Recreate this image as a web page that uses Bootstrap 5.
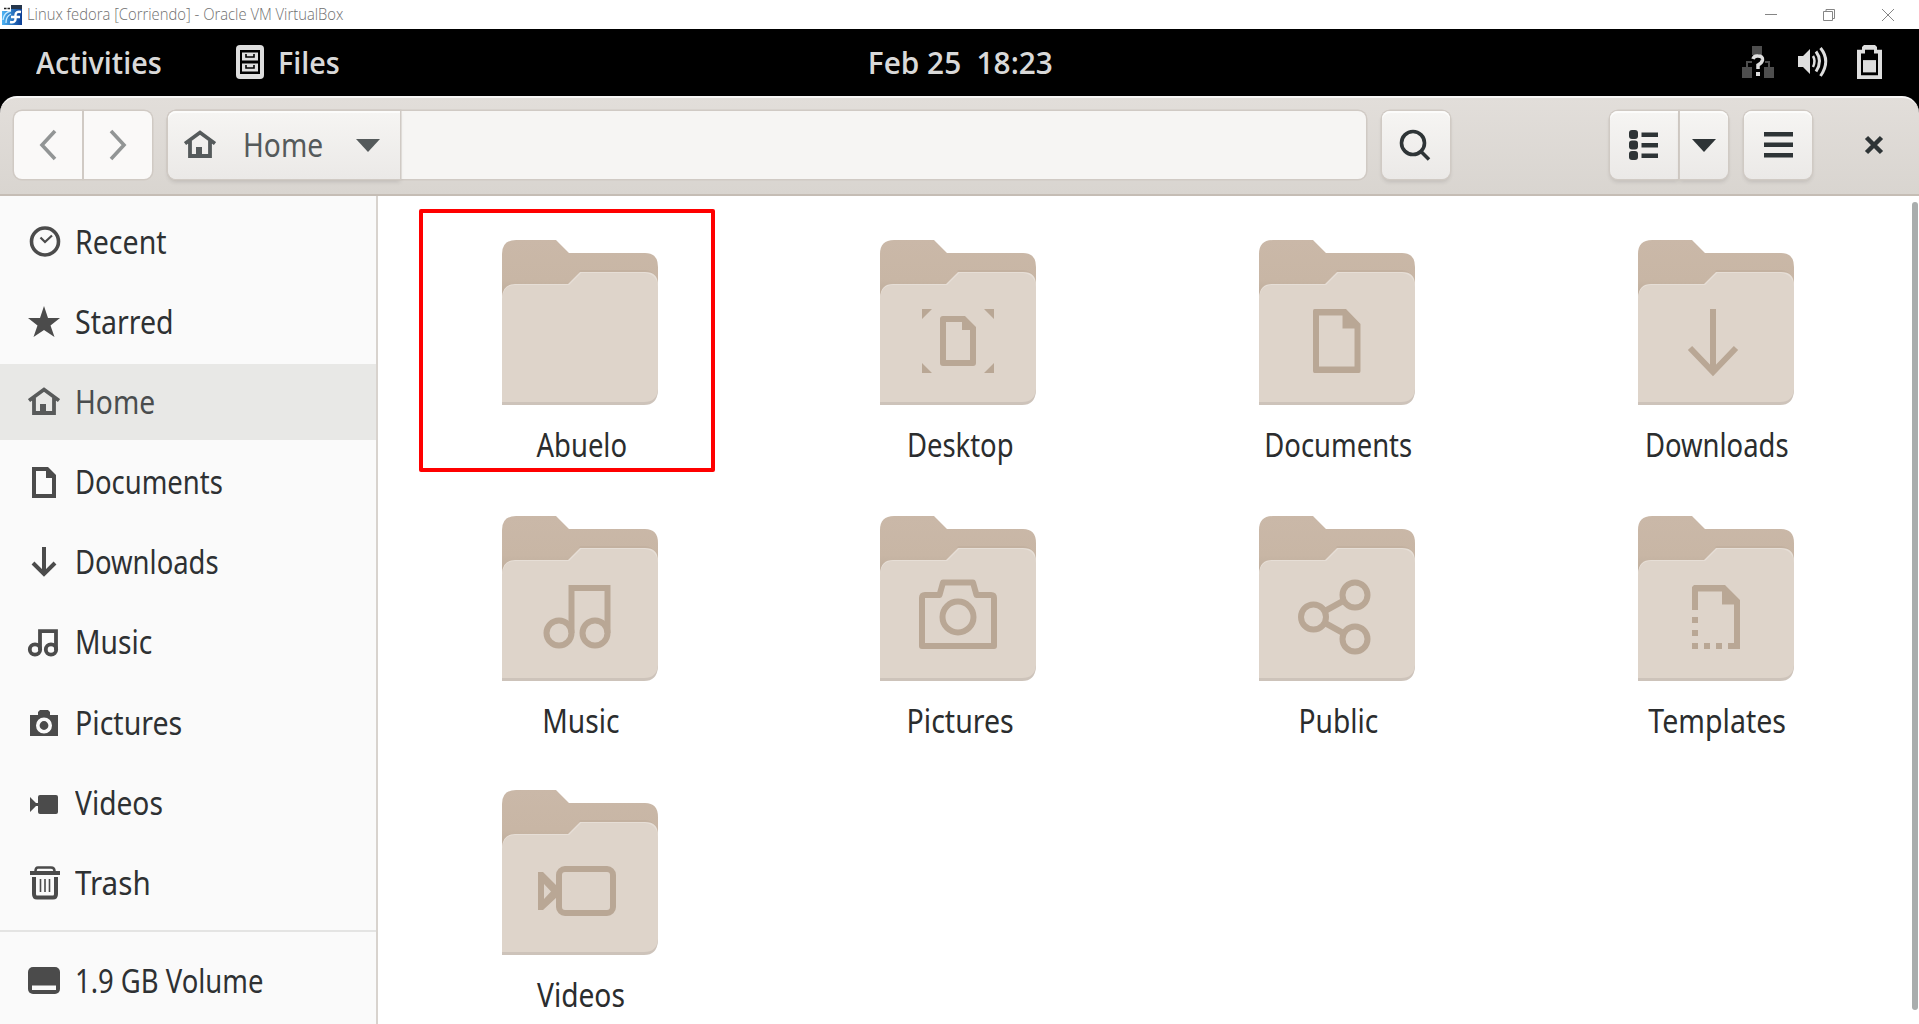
<!DOCTYPE html>
<html lang="en">
<head>
<meta charset="utf-8">
<title>Files</title>
<link rel="stylesheet" href="https://cdn.jsdelivr.net/npm/bootstrap@5.3.0/dist/css/bootstrap.min.css">
<script src="https://cdn.jsdelivr.net/npm/bootstrap@5.3.0/dist/js/bootstrap.bundle.min.js"></script>
<style>
body{height:1024px;font-family:"Noto Sans","Open Sans",sans-serif;font-size:32px;line-height:1;background:#fff;color:#2b2e2f}
svg{display:block;flex:none;overflow:visible}
.fit{display:inline-block;white-space:nowrap;transform:scaleX(.857);transform-origin:0 50%}
.fit.k88{transform:scaleX(.88)}
.fit.k90{transform:scaleX(.892)}
.fit.k92{transform:scaleX(.925)}
.host-bar{height:29px;padding:0 25px 0 2px;font-family:"Open Sans",sans-serif;font-size:15.5px;font-weight:300;color:#707070}
.fit.host-title{transform:scaleX(.855)}
.shell-bar{height:67px;background:#000;color:#d9d9d9;font-family:"Open Sans",sans-serif;font-weight:600;font-size:31px;display:grid;grid-template-columns:1fr auto 1fr;padding:0 37px 1px 36px}
.shell-bar .clock{transform:scaleX(.96);transform-origin:50% 50%;margin-left:2px}
.shell-wrap{background:#000}
.head-bar{height:100px;border-radius:17px 17px 0 0;background:linear-gradient(#e2deda,#d9d5d0);border-top:2px solid #f8f7f6;border-bottom:2px solid #c5bdb5;padding:0 36px 2px 14px}
.tool-btn,.path-btn{height:68px;border:0;border-radius:8px;padding:0;background:linear-gradient(#f6f5f3,#ebe9e7);box-shadow:0 0 0 1.5px #d0cac4,0 3px 4px rgba(0,0,0,.12),inset 0 2px #fcfcfb;color:#2e3436;display:flex;align-items:center;justify-content:center}
.tool-btn{width:68px}
.tool-btn.dim{background:#faf9f8;color:#929595;box-shadow:0 0 0 1.5px #d0cac4}
.path-box{width:1198px;height:68px;border-radius:8px;background:#f6f5f3;box-shadow:0 0 0 1.5px #d0cac4}
.path-btn{width:232px;border-radius:8px 0 0 8px;color:#555a5b;justify-content:flex-start;padding-left:16px}
.start-r{border-radius:8px 0 0 8px!important}.end-r{border-radius:0 8px 8px 0!important}
.side{width:378px;background:#fafafa;border-right:2px solid #d8d3ce;padding-top:8px}
.side-item{height:76px;margin-bottom:4.1px;padding-left:28px;gap:15px;color:#2e3133}
.side-item svg{color:#4b4b4b}
.side-item.active{background:#e8e8e6;color:#4a4d4e}
.side-item.active svg{color:#585a5a}
.side-line{height:2px;background:#e4e4e3;margin:9px 0 11px}
.files{padding:44px 14px 0 12.5px}
.file-cell{height:275px;width:25%}
.file-cell .fit{transform-origin:50% 50%;margin:23px 0 0 3px;color:#2b2d2e}
.marked{left:28px;top:-31px;width:296px;height:263px;border:4px solid #f00;border-radius:2px}
.glyph{fill:none;stroke:#b9a795;stroke-width:6}
.solid{fill:#b9a795;stroke:none}
.scroll{width:6px;height:808px;background:#a9adad;border-radius:3px;right:1px;top:6px}
</style>
</head>
<body class="d-flex flex-column overflow-hidden">
<svg width="0" height="0" class="position-absolute">
<defs>
<linearGradient id="back" x1="0" y1="0" x2="0" y2="1"><stop offset="0" stop-color="#cab8a8"/><stop offset=".65" stop-color="#c8b6a5"/><stop offset="1" stop-color="#bcab9a"/></linearGradient>
<symbol id="folder" viewBox="0 0 156 166">
<path fill="url(#back)" d="M0 60V14Q0 0 14 0H54L67 13H143Q156 13 156 27V60Z"/>
<path fill="#bfae9d" d="M78 30H143Q154 31 156 45V56H66Z" opacity=".6"/>
<path fill="#cdc3ba" d="M0 60H156V151Q155 165 142 165H0Z"/>
<path fill="#e6ded6" d="M0 57Q1 44 13 44H66L78 32H143Q156 32 156 45V70H0Z"/>
<path fill="#ded4ca" d="M0 59Q1 45 13 45H67L79 33H143Q155 34 156 47V149Q155 162 142 162H0Z"/>
</symbol>
<symbol id="home" viewBox="0 0 32 32"><path fill="none" stroke="currentColor" stroke-width="3.8" d="M1 14.5L16 3.5L31 14.5M6 12V27H26V12"/><path fill="currentColor" d="M12 18H18V28H12Z"/></symbol>
</defs>
</svg>

<header class="host-bar flex-shrink-0 d-flex align-items-center justify-content-between">
<div class="d-flex align-items-center" style="gap:5px">
<svg width="20" height="20"><defs><linearGradient id="fed"><stop stop-color="#4fb5f5"/><stop offset="1" stop-color="#0c3d94"/></linearGradient></defs><path fill="url(#fed)" d="M0 0H20V20H0Z"/><path fill="#26364b" d="M0 0H20V4H0Z"/><path fill="none" stroke="#c8ecff" stroke-width="1.3" d="M1 15Q2 7 9 6M4 18Q4 11 9 9"/><path fill="#fff" d="M0 0H9V6H0Z"/><path stroke="#222" stroke-width="1.6" d="M2 3.5H4.5M5.500 3.500H8"/><path fill="none" stroke="#fff" stroke-width="2.4" d="M19 7Q13.500 6 13.500 10V14Q13.500 18 8 17M9 12H18"/></svg>
<span class="fit" style="transform:scaleX(.955)">Linux fedora [Corriendo] - Oracle VM VirtualBox</span></div>
<svg width="129" height="12" fill="none" stroke="#858585"><path d="M0 5.500H12M58.500 2.500H67.500V11.500H58.500ZM61 2.500V.5H69.500V9.500H67.500M117 0L129 12M129 0L117 12"/></svg>
</header>

<nav class="shell-bar flex-shrink-0 align-items-center">
<div class="d-flex align-items-center"><span class="fit k92" style="width:199px">Activities</span>
<svg width="30" height="36"><rect x="1" y="1" width="28" height="34" rx="4" fill="#dedede"/><path d="M5 6H25V30H5Z" fill="#000"/><path d="M7 8.500H23V16.500H7ZM7 19.500H23V27.500H7Z" fill="#dedede"/><path fill="none" stroke="#000" stroke-width="1.6" d="M11 10V13H19V10M11 21V24H19V21"/></svg>
<span class="fit k92" style="margin-left:13px">Files</span></div>
<span class="fit clock">Feb 25&nbsp; 18:23</span>
<div class="d-flex align-items-center justify-content-end">
<svg width="32" height="32"><path fill="#4e4e4e" d="M10 0H20V9H10ZM0 21H10V32H0ZM22 21H32V32H22Z"/><path fill="none" stroke="#4e4e4e" stroke-width="2" d="M5 22V16H10M27 22V16H23"/><path fill="none" stroke="#dedede" stroke-width="3.5" d="M11 13Q12 9.500 16 10Q21 10 20.500 14Q20 17 16 19V23"/><path fill="#dedede" d="M14 26H18V30H14Z"/></svg>
<svg width="32" height="32" style="margin-left:23px"><path fill="#dedede" d="M1 10H6L13 3V28L6 21H1Z"/><g fill="none" stroke="#dedede" stroke-width="3"><path d="M16 10Q19 15 16 21" stroke-width="2.500"/><path d="M19 5.500Q26 15 19 25.500"/><path d="M23.500 2Q34 15 23.500 30"/></g></svg>
<svg width="25" height="34" viewBox="0 0 25 36" preserveAspectRatio="none" style="margin-left:28px"><path fill="#dedede" fill-rule="evenodd" d="M0 5H5V2L7 0H18L20 2V5H25V36H0ZM4 9V32H21V9H17V5H8V9Z"/><path fill="#dedede" d="M6 16H19V29H6Z"/></svg>
</div>
</nav>

<div class="shell-wrap flex-shrink-0"><div class="head-bar d-flex align-items-center">
<div class="d-flex" style="gap:2px"><button class="tool-btn dim start-r"><svg width="18" height="30" fill="none" stroke="currentColor" stroke-width="3.6"><path d="M16 1L3 15L16 29"/></svg></button><button class="tool-btn dim end-r"><svg width="18" height="30" fill="none" stroke="currentColor" stroke-width="3.6"><path d="M2 1L15 15L2 29"/></svg></button></div>
<div class="path-box" style="margin-left:16px"><button class="path-btn"><svg width="32" height="32"><use href="#home"/></svg><span class="fit k88" style="margin-left:27px;width:88px">Home</span><svg width="24" height="13" style="margin-left:25px"><path fill="currentColor" d="M0 0H24L12 13Z"/></svg></button></div>
<button class="tool-btn" style="margin-left:16px"><svg width="32" height="32" fill="none" stroke="currentColor" stroke-width="3.6"><circle cx="13" cy="14" r="11.500"/><path d="M20.500 22L29 30.500"/></svg></button>
<div class="d-flex ms-auto" style="gap:2px"><button class="tool-btn start-r"><svg width="30" height="30" fill="currentColor"><rect y="0" width="9" height="9" rx="3"/><rect y="10.500" width="9" height="9" rx="3"/><rect y="21" width="9" height="9" rx="3"/><path d="M12.500 2.500H29V7H12.500ZM12.500 13H29V17.500H12.500ZM12.500 23.500H29V28H12.500Z"/></svg></button><button class="tool-btn end-r" style="width:48px"><svg width="24" height="13"><path fill="currentColor" d="M0 0H24L12 13Z"/></svg></button></div>
<button class="tool-btn" style="margin-left:16px"><svg width="29" height="26" fill="currentColor"><path d="M0 0H29V4.500H0ZM0 10.500H29V15H0ZM0 21H29V25.500H0Z"/></svg></button>
<svg width="18" height="18" style="margin-left:53px" stroke="#2e3436" stroke-width="4.500"><path d="M1.500 1.500L16.500 16.500M16.500 1.500L1.500 16.500"/></svg>
</div></div>

<main class="d-flex flex-grow-1 position-relative" style="min-height:0">
<aside class="side flex-shrink-0">
<div class="side-item d-flex align-items-center"><svg width="32" height="32" fill="none" stroke="currentColor"><circle cx="17" cy="15.500" r="13.500" stroke-width="3.600"/><path d="M12.500 11.500L17 16L24 9.500" stroke-width="2.200"/></svg><span class="fit k90">Recent</span></div>
<div class="side-item d-flex align-items-center"><svg width="32" height="32"><path fill="currentColor" d="M16 0L20 12H32L22.500 19.500L26.500 31L16 24L5.500 31L9.500 19.500L0 12H12Z"/></svg><span class="fit k90">Starred</span></div>
<div class="side-item active d-flex align-items-center"><svg width="32" height="32"><use href="#home"/></svg><span class="fit k88">Home</span></div>
<div class="side-item d-flex align-items-center"><svg width="32" height="32"><path fill="currentColor" fill-rule="evenodd" d="M4 1H20L28 9V32H4ZM8 5V28H24V12H18V5Z"/></svg><span class="fit">Documents</span></div>
<div class="side-item d-flex align-items-center"><svg width="32" height="32" fill="none" stroke="currentColor" stroke-width="4"><path d="M16 1V27M5 17L16 28L27 17"/></svg><span class="fit">Downloads</span></div>
<div class="side-item d-flex align-items-center"><svg width="32" height="32" fill="none" stroke="currentColor" stroke-width="3.800"><circle cx="7" cy="23.500" r="5.200"/><circle cx="23" cy="23.500" r="5.200"/><path d="M12 24V5.200H28V24"/></svg><span class="fit k88">Music</span></div>
<div class="side-item d-flex align-items-center"><svg width="32" height="32"><path fill="currentColor" d="M2 8H10V5L12 3H20L22 5V8H30V29H2Z"/><circle cx="16" cy="18.500" r="6.200" fill="currentColor" stroke="#fafafa" stroke-width="3.600"/></svg><span class="fit k90">Pictures</span></div>
<div class="side-item d-flex align-items-center"><svg width="32" height="32" fill="currentColor"><rect x="10" y="8" width="20" height="19" rx="2"/><path d="M2 10L8 16H11V19H8L2 25Z"/></svg><span class="fit k88">Videos</span></div>
<div class="side-item d-flex align-items-center"><svg width="32" height="32" fill="none" stroke="currentColor"><path stroke-width="4" d="M2 6H32M6 10V27Q6 30.500 9 30.500H25Q28 30.500 28 27V10"/><path stroke-width="2.500" d="M7.500 4Q7.500 .5 10 .5H23Q26.500 .5 26.500 4"/><path stroke-width="1.600" d="M12.500 12V25M17 12V25M21.500 12V25"/></svg><span class="fit k92">Trash</span></div>
<div class="side-line"></div>
<div class="side-item d-flex align-items-center"><svg width="32" height="32"><rect y="2" width="32" height="27" rx="5" fill="currentColor"/><path fill="#fafafa" d="M4 20.500H28V25H4Z"/></svg><span class="fit">1.9 GB Volume</span></div>
</aside>
<section class="files d-flex flex-wrap align-content-start flex-grow-1">
<div class="file-cell position-relative d-flex flex-column align-items-center"><div class="marked position-absolute"></div><svg width="156" height="166"><use href="#folder"/></svg><span class="fit">Abuelo</span></div>
<div class="file-cell d-flex flex-column align-items-center"><svg width="156" height="166"><use href="#folder"/><g class="glyph"><path class="solid" d="M42 69H52L42 79ZM114 69V79L104 69ZM42 133V123L52 133ZM114 133H104L114 123Z"/><path class="solid" fill-rule="evenodd" d="M63 76H85L96 87V123Q96 126 93 126H63Q60 126 60 123V79Q60 76 63 76ZM66 82V120H90V90H82V82Z"/></g></svg><span class="fit">Desktop</span></div>
<div class="file-cell d-flex flex-column align-items-center"><svg width="156" height="166"><use href="#folder"/><path class="solid" fill-rule="evenodd" d="M56 69H87L101.500 84V131Q101.500 133 100 133H55.500Q54 133 54 131V71Q54 69 55.500 69ZM60 75.500V126.500H95.500V88.500H83.500V75.500Z"/></svg><span class="fit">Documents</span></div>
<div class="file-cell d-flex flex-column align-items-center"><svg width="156" height="166"><use href="#folder"/><path class="glyph" d="M75 69V131M52 108L75 132L98 108"/></svg><span class="fit">Downloads</span></div>
<div class="file-cell d-flex flex-column align-items-center" style="padding-top:1px"><svg width="156" height="166"><use href="#folder"/><g class="glyph"><circle cx="57" cy="117" r="12.500"/><circle cx="93" cy="117" r="12.500"/><path d="M69.500 117V72H105.500V117"/></g></svg><span class="fit k88">Music</span></div>
<div class="file-cell d-flex flex-column align-items-center" style="padding-top:1px"><svg width="156" height="166"><use href="#folder"/><g class="glyph"><path stroke-linejoin="round" d="M42 130V82Q42 79 45 79H59.500L63 66.500H93L96.500 79H111Q114 79 114 82V130Z"/><circle cx="78" cy="101" r="15.500"/></g></svg><span class="fit k90">Pictures</span></div>
<div class="file-cell d-flex flex-column align-items-center" style="padding-top:1px"><svg width="156" height="166"><use href="#folder"/><g class="glyph"><circle cx="54.500" cy="101" r="12.500"/><circle cx="96" cy="79" r="12.500"/><circle cx="96" cy="123" r="12.500"/><path d="M66 95L85 84.500M66 107L85 117.500"/></g></svg><span class="fit k88">Public</span></div>
<div class="file-cell d-flex flex-column align-items-center" style="padding-top:1px"><svg width="156" height="166"><use href="#folder"/><path class="solid" d="M56 69H87L102 84V133H90V127H96V88.500H84V75.500H60V94H54V71ZM54 101H60V107H54ZM54 114H60V120H54ZM54 127H60V133H54ZM66 127H72V133H66ZM78 127H84V133H78Z"/></svg><span class="fit k90">Templates</span></div>
<div class="file-cell d-flex flex-column align-items-center"><svg width="156" height="166"><use href="#folder"/><g class="glyph"><rect x="57" y="79" width="54" height="44" rx="6"/><path class="solid" fill-rule="evenodd" d="M36 82H41L55 96V107L41 120H36ZM42 94V109L49 101.500Z"/></g></svg><span class="fit k88">Videos</span></div>
</section>
<div class="scroll position-absolute"></div>
</main>
</body>
</html>
